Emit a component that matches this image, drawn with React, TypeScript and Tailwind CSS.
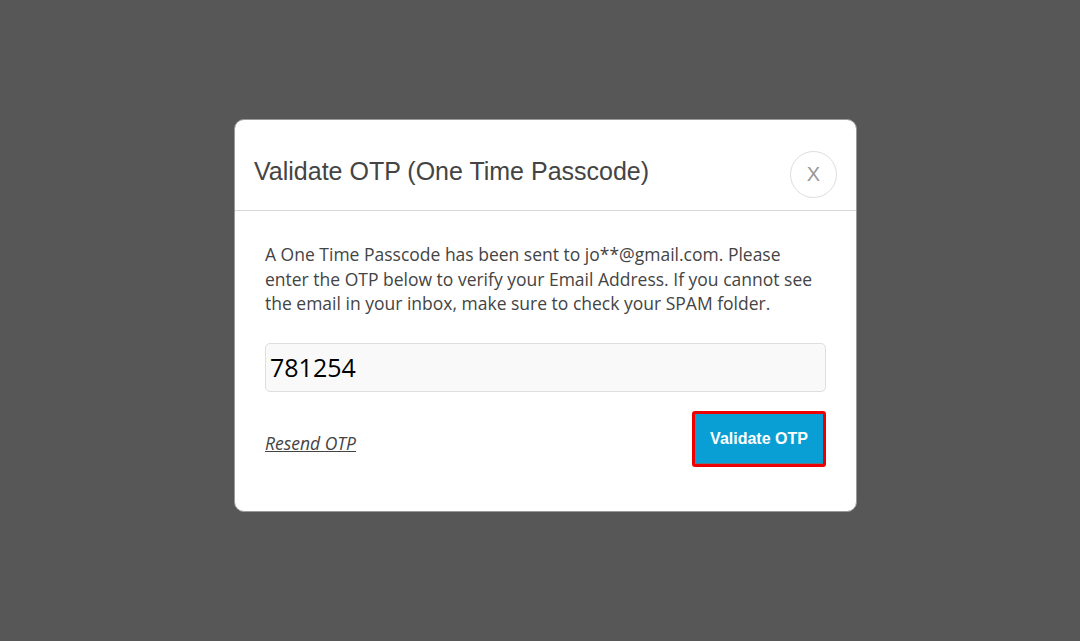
export default function App() {
  return (
    <div className="flex h-[641px] w-full items-start bg-[#575757] pt-[119px] pl-[234px]">
      <div className="w-[623px] rounded-[10px] border border-[#999] bg-white">
        {/* Header */}
        <div className="flex h-[91px] items-center justify-between border-b border-[#d9d9d9] pt-[14px] pl-[19px] pr-[19px]">
          <h2 className="font-['Liberation_Sans',Arial,sans-serif] text-[25px] text-[#444]">
            Validate OTP (One Time Passcode)
          </h2>
          <button className="mt-[4px] flex h-[47px] w-[47px] items-center justify-center rounded-full border border-[#ddd] bg-white font-['Liberation_Sans',Arial,sans-serif] text-[20px] text-[#999]">
            X
          </button>
        </div>

        {/* Body */}
        <div className="px-[30px] pt-[31px] pb-[44px] font-['Open_Sans',sans-serif]">
          <p className="text-[17.5px] leading-[24.5px] text-[#444]">
            A One Time Passcode has been sent to jo**@gmail.com. Please enter the OTP below to verify your Email Address. If you cannot see the email in your inbox, make sure to check your SPAM folder.
          </p>

          <input
            type="text"
            defaultValue="781254"
            className="mt-[27px] block h-[49px] w-full rounded-[5px] border border-[#dedede] bg-[#f9f9f9] px-[4px] text-[25px] text-black outline-none"
          />

          <div className="mt-[19px] flex items-center justify-between">
            <a href="#" className="pt-[10px] text-[17.5px] italic text-[#444] underline">
              Resend OTP
            </a>
            <button className="rounded-[3px] border-[3px] border-[#ee0000] bg-[#ee0000]">
              <span className="block h-[50px] w-[128px] border-b border-[#5a7a8a] bg-[#0a9fd4] font-['Liberation_Sans',Arial,sans-serif] text-[16px] leading-[50px] font-bold text-white">
                Validate OTP
              </span>
            </button>
          </div>
        </div>
      </div>
    </div>
  );
}
